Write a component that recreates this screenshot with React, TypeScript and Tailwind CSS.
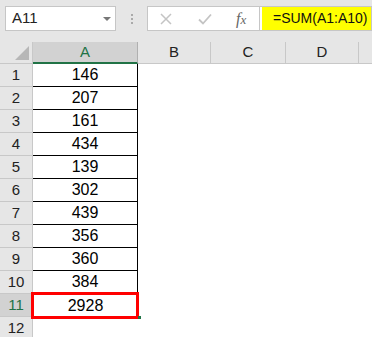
import { useMemo } from "react";

const values = [146, 207, 161, 434, 139, 302, 439, 356, 360, 384];

const otherCols = [
    { label: "B", w: "w-[73px]" },
    { label: "C", w: "w-[75px]" },
    { label: "D", w: "w-[73px]" },
];

const RowHead = ({ n, active }: { n: number; active?: boolean }) => (
    <div
        className={`flex w-[33px] shrink-0 items-center justify-center border-r border-b border-[#c8c8c8] ${
            active ? "bg-[#d2d2d2] text-[#217346]" : "bg-[#e6e6e6] text-[#222]"
        }`}
    >
        {n}
    </div>
);

export default function App() {
    const total = useMemo(() => values.reduce((a, b) => a + b, 0), []);

    return (
        <div className="h-[337px] w-[372px] overflow-hidden bg-white text-[15px] font-['Liberation_Sans',Arial,sans-serif]">
            {/* formula bar */}
            <div className="flex h-[42px] items-start bg-[#e6e6e6] pl-[5px] pt-[6px]">
                <div className="relative flex h-[25px] w-[111px] items-center border border-[#c6c6c6] bg-white pl-[6px] text-[#222]">
                    A11
                    <span className="absolute right-[4px] top-[10px] h-0 w-0 border-x-[4px] border-t-[4px] border-x-transparent border-t-[#777]" />
                </div>
                <div className="flex h-[25px] w-[31px] flex-col items-center justify-center gap-[2px]">
                    <span className="h-[2px] w-[2px] bg-[#aaa]" />
                    <span className="h-[2px] w-[2px] bg-[#aaa]" />
                    <span className="h-[2px] w-[2px] bg-[#aaa]" />
                </div>
                <div className="flex h-[25px] w-[112px] items-center border border-r-0 border-[#c6c6c6] bg-white">
                    <svg width="14" height="14" viewBox="0 0 14 14" className="ml-[11px]">
                        <path d="M2 2 L12 12 M12 2 L2 12" stroke="#c4c4c4" strokeWidth="1.5" />
                    </svg>
                    <svg width="16" height="14" viewBox="0 0 16 14" className="ml-[24px]">
                        <path d="M2 7.5 L6 11.5 L14 2.5" stroke="#c4c4c4" strokeWidth="1.8" fill="none" />
                    </svg>
                    <span className="ml-[23px] font-['Liberation_Serif',serif] text-[16px] italic text-[#666]">
                        f<span className="text-[13px]">x</span>
                    </span>
                </div>
                <div className="flex h-[25px] flex-1 items-center border border-[#c6c6c6] bg-white pl-[2px]">
                    <span className="flex h-full items-center bg-[#ffff00] pl-[11px] pr-[3px] text-[14px] text-[#111]">
                        =SUM(A1:A10)
                    </span>
                </div>
            </div>

            {/* column headers */}
            <div className="flex h-[22px] bg-[#e6e6e6] text-[#222]">
                <div className="relative w-[33px] shrink-0 border-r border-b border-[#c8c8c8]">
                    <svg width="14" height="14" viewBox="0 0 14 14" className="absolute bottom-[3px] right-[3px]">
                        <path d="M14 0 L14 14 L0 14 Z" fill="#b7b7b7" />
                    </svg>
                </div>
                <div className="flex w-[105px] shrink-0 items-center justify-center border-r border-[#b0b0b0] border-b-2 border-b-[#217346] bg-[#d2d2d2] text-[#217346]">
                    A
                </div>
                {otherCols.map((c) => (
                    <div
                        key={c.label}
                        className={`flex ${c.w} shrink-0 items-center justify-center border-r border-b border-[#c8c8c8]`}
                    >
                        {c.label}
                    </div>
                ))}
                <div className="flex-1 border-b border-[#c8c8c8]" />
            </div>

            {/* rows */}
            {values.map((v, i) => (
                <div key={i} className="flex h-[23px]">
                    <RowHead n={i + 1} />
                    <div className="flex w-[105px] shrink-0 items-center justify-center border-r border-b border-black text-[16px] text-black">
                        {v}
                    </div>
                </div>
            ))}
            <div className="flex h-[23px]">
                <RowHead n={11} active />
                <div className="relative flex w-[105px] shrink-0 items-center justify-center text-[16px] text-black">
                    {total}
                    {/* selection */}
                    <div className="absolute -left-[2px] -top-[2px] -bottom-[2px] -right-[1px] border-[3px] border-[#ff0000]" />
                    <span className="absolute -bottom-[2px] -right-[3px] h-[3px] w-[3px] bg-[#217346]" />
                </div>
            </div>
            <div className="flex h-[23px]">
                <RowHead n={12} />
            </div>
        </div>
    );
}
